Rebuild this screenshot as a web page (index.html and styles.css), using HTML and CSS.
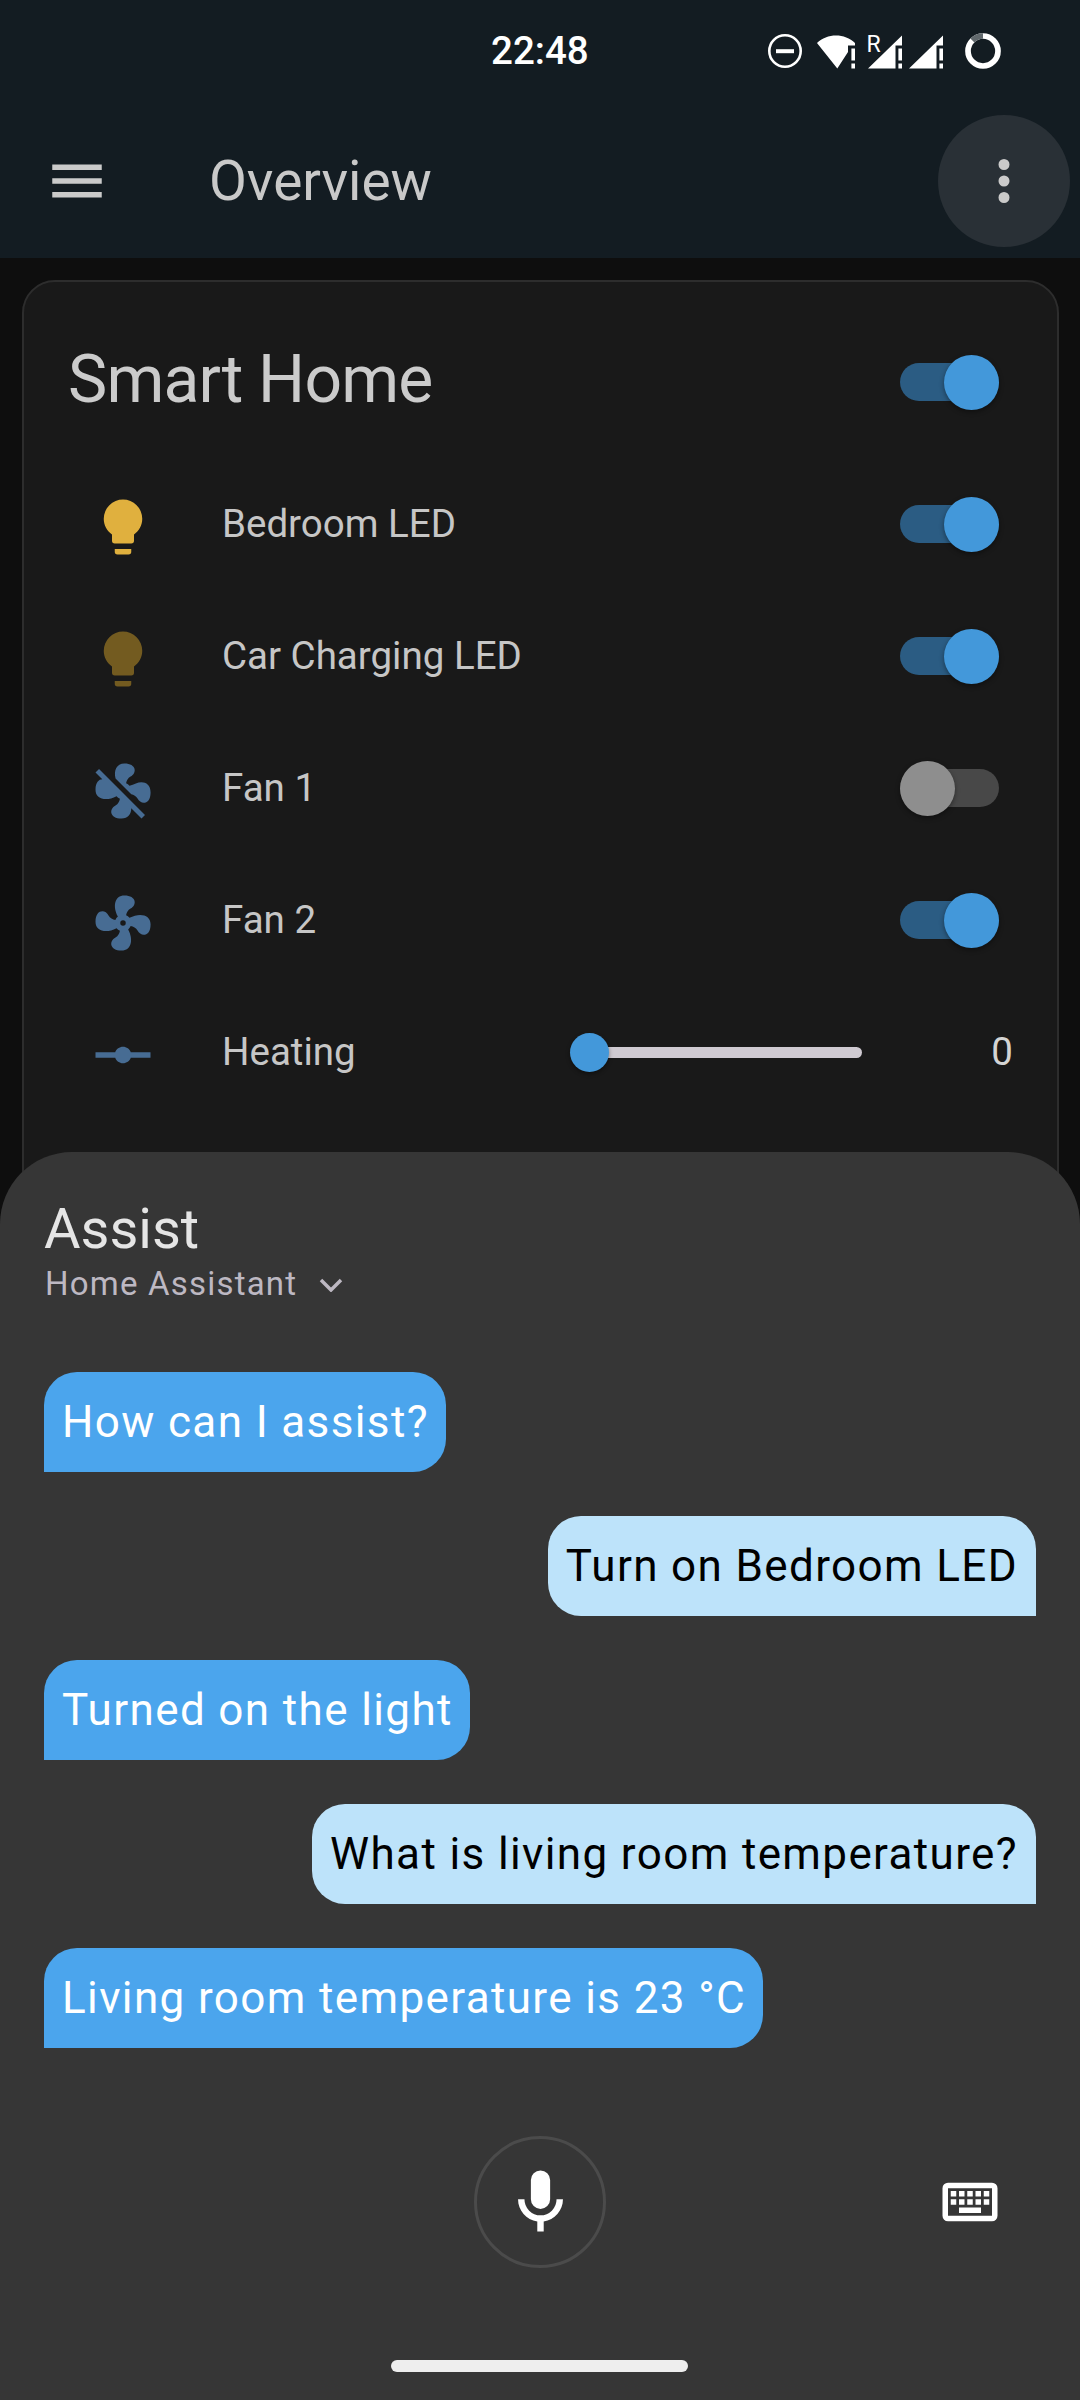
FILE: index.html
```html
<!DOCTYPE html>
<html lang="en">
<head>
<meta charset="utf-8">
<title>Overview</title>
<link rel="stylesheet" href="styles.css">
</head>
<body>
<div class="screen">
  <header class="appbar">
    <div class="statusbar">
      <span class="time">22:48</span>
      <div class="status-icons">
        <svg class="si-dnd" viewBox="0 0 34 36"><circle cx="17" cy="18" r="15.7" fill="none" stroke="#fff" stroke-width="2.6"/><rect x="8" y="16.200" width="18" height="4" fill="#fff"/></svg>
        <svg class="si-wifi" viewBox="0 0 38 36"><path d="M0 10C5 5 12 2.500 19 2.500C26 2.500 33 5 38 10V12.500H31V19L20.300 35.500Z" fill="#fff"/><rect x="34.400" y="15.500" width="3.600" height="12" fill="#fff"/><rect x="34.400" y="30.500" width="3.600" height="5" fill="#fff"/></svg>
        <svg class="si-signal" viewBox="0 0 35 36"><path d="M0 35.500L34 2.500V12.500H27.500V35.500Z" fill="#fff"/><rect x="30.400" y="15.500" width="3.600" height="12" fill="#fff"/><rect x="30.400" y="30.500" width="3.600" height="5" fill="#fff"/><text x="-1.500" y="18.500" class="si-r">R</text></svg>
        <svg class="si-signal si-signal2" viewBox="0 0 35 36"><path d="M0 35.500L34 2.500V12.500H27.500V35.500Z" fill="#fff"/><rect x="30.400" y="15.500" width="3.600" height="12" fill="#fff"/><rect x="30.400" y="30.500" width="3.600" height="5" fill="#fff"/></svg>
        <svg class="si-batt" viewBox="0 0 36 36"><circle cx="18" cy="18" r="15" fill="none" stroke="#fff" stroke-width="5.700"/><path d="M18 3A15 15 0 0 0 7.400 7.400" fill="none" stroke="#61696d" stroke-width="5.700"/></svg>
      </div>
    </div>
    <div class="toolbar">
      <svg class="tb-icon" viewBox="0 0 24 24"><path d="M3,6H21V8H3V6M3,11H21V13H3V11M3,16H21V18H3V16Z"/></svg>
      <span class="tb-title">Overview</span>
      <span class="tb-more"><svg class="tb-icon" viewBox="0 0 24 24"><path d="M12,16A2,2 0 0,1 14,18A2,2 0 0,1 12,20A2,2 0 0,1 10,18A2,2 0 0,1 12,16M12,10A2,2 0 0,1 14,12A2,2 0 0,1 12,14A2,2 0 0,1 10,12A2,2 0 0,1 12,10M12,4A2,2 0 0,1 14,6A2,2 0 0,1 12,8A2,2 0 0,1 10,6A2,2 0 0,1 12,4Z"/></svg></span>
    </div>
  </header>

  <main class="card">
    <div class="card-head">
      <h1 class="card-title">Smart Home</h1>
      <span class="switch on"><span class="knob"></span></span>
    </div>
    <div class="row">
      <span class="badge"><svg class="ic bulb-on" viewBox="0 0 24 24"><path d="M12,2A7,7 0 0,0 5,9C5,11.38 6.19,13.47 8,14.74V17A1,1 0 0,0 9,18H15A1,1 0 0,0 16,17V14.74C17.81,13.47 19,11.38 19,9A7,7 0 0,0 12,2M9,21A1,1 0 0,0 10,22H14A1,1 0 0,0 15,21V20H9V21Z"/></svg></span>
      <span class="label">Bedroom LED</span>
      <span class="switch on"><span class="knob"></span></span>
    </div>
    <div class="row">
      <span class="badge"><svg class="ic bulb-dim" viewBox="0 0 24 24"><path d="M12,2A7,7 0 0,0 5,9C5,11.38 6.19,13.47 8,14.74V17A1,1 0 0,0 9,18H15A1,1 0 0,0 16,17V14.74C17.81,13.47 19,11.38 19,9A7,7 0 0,0 12,2M9,21A1,1 0 0,0 10,22H14A1,1 0 0,0 15,21V20H9V21Z"/></svg></span>
      <span class="label">Car Charging LED</span>
      <span class="switch on"><span class="knob"></span></span>
    </div>
    <div class="row">
      <span class="badge"><svg class="ic blue" viewBox="0 0 24 24"><path d="M12.5,2C9.64,2 8.57,4.55 9.29,7.47L15,13.16C15.87,13.37 16.81,13.81 17.28,14.73C18.46,17.1 22.03,17 22.03,12.5C22.03,8.92 19,8.13 16.66,9.31C15.96,9.66 15.17,9.9 14.35,10.13C14.03,9.73 13.61,9.42 13.13,9.22C13.32,8.29 13.76,7.24 14.75,6.75C17.11,5.57 17,2 12.5,2M3.28,4L2,5.27L4.47,7.73C3.22,7.74 2,8.87 2,11.5C2,15.07 5.96,15.85 9.65,13.87C9.97,14.27 10.4,14.59 10.89,14.79C10.69,15.71 10.25,16.75 9.27,17.24C6.91,18.42 7,22 11.5,22C13.8,22 15.04,20.35 15,18.26L18.73,22L20,20.72L3.28,4Z"/></svg></span>
      <span class="label">Fan 1</span>
      <span class="switch"><span class="knob"></span></span>
    </div>
    <div class="row">
      <span class="badge"><svg class="ic blue" viewBox="0 0 24 24"><path d="M12,11A1,1 0 0,0 11,12A1,1 0 0,0 12,13A1,1 0 0,0 13,12A1,1 0 0,0 12,11M12.5,2C17,2 17.11,5.57 14.75,6.75C13.76,7.24 13.32,8.29 13.13,9.22C13.61,9.42 14.03,9.73 14.35,10.13C18.05,8.13 22.03,8.92 22.03,12.5C22.03,17 18.46,17.1 17.28,14.73C16.78,13.74 15.72,13.3 14.79,13.11C14.59,13.59 14.28,14 13.88,14.34C15.87,18.03 15.08,22 11.5,22C7,22 6.91,18.42 9.27,17.24C10.25,16.75 10.69,15.71 10.89,14.79C10.4,14.59 9.97,14.27 9.65,13.87C5.96,15.85 2,15.07 2,11.5C2,7 5.56,6.89 6.74,9.26C7.24,10.25 8.29,10.68 9.22,10.87C9.41,10.39 9.73,9.97 10.14,9.65C8.15,5.96 8.94,2 12.5,2Z"/></svg></span>
      <span class="label">Fan 2</span>
      <span class="switch on"><span class="knob"></span></span>
    </div>
    <div class="row">
      <span class="badge"><svg class="ic blue" viewBox="0 0 24 24"><path d="M2 11H9.17C9.58 9.83 10.69 9 12 9S14.42 9.83 14.83 11H22V13H14.83C14.42 14.17 13.31 15 12 15S9.58 14.17 9.17 13H2V11Z"/></svg></span>
      <span class="label">Heating</span>
      <span class="slider"><span class="thumb"></span></span>
      <span class="value">0</span>
    </div>
  </main>

  <section class="sheet">
    <div class="sheet-head">
      <h2 class="sheet-title">Assist</h2>
      <div class="sheet-sub">
        <span>Home Assistant</span>
        <svg class="chev" viewBox="0 0 24 14"><path d="M2 2L12 12L22 2" fill="none" stroke="#bdb8c2" stroke-width="3.500"/></svg>
      </div>
    </div>
    <div class="messages">
      <div class="bubble hass">How can I assist?</div>
      <div class="bubble user">Turn on Bedroom LED</div>
      <div class="bubble hass">Turned on the light</div>
      <div class="bubble user">What is living room temperature?</div>
      <div class="bubble hass">Living room temperature is 23 °C</div>
    </div>
    <div class="controls">
      <span class="mic"><svg class="mic-icon" viewBox="0 0 24 24"><path d="M12,2A3,3 0 0,1 15,5V11A3,3 0 0,1 12,14A3,3 0 0,1 9,11V5A3,3 0 0,1 12,2M19,11C19,14.53 16.39,17.44 13,17.93V21H11V17.93C7.61,17.44 5,14.53 5,11H7A5,5 0 0,0 12,16A5,5 0 0,0 17,11H19Z"/></svg></span>
      <svg class="kbd" viewBox="0 0 24 24"><path d="M4,5A2,2 0 0,0 2,7V17A2,2 0 0,0 4,19H20A2,2 0 0,0 22,17V7A2,2 0 0,0 20,5H4M4,7H20V17H4V7M5,8V10H7V8H5M8,8V10H10V8H8M11,8V10H13V8H11M14,8V10H16V8H14M17,8V10H19V8H17M5,11V13H7V11H5M8,11V13H10V11H8M11,11V13H13V11H11M14,11V13H16V11H14M17,11V13H19V11H17M8,14V16H16V14H8Z"/></svg>
    </div>
    <div class="homebar"></div>
  </section>
</div>
</body>
</html>
```
FILE: styles.css
```css
* { box-sizing: border-box; }
html, body { margin: 0; padding: 0; }
body { font-family: Roboto, "Liberation Sans", sans-serif; background: #0f0f0f; }
h1, h2 { margin: 0; font-weight: 400; }

.screen { position: relative; width: 1080px; height: 2400px; overflow: hidden; background: #0e0e0e; }

.appbar { height: 258px; background: #131c22; }
.statusbar { height: 104px; display: flex; align-items: center; padding-left: 491px; padding-bottom: 3px; }
.time { width: 277px; color: #fff; font-size: 38.5px; font-weight: 500; line-height: 44px; padding-top: 1px; }
.status-icons { display: flex; align-items: center; }
.status-icons svg { display: block; height: 36px; overflow: visible; }
.si-dnd { width: 34px; }
.si-wifi { width: 38px; margin-left: 15px; }
.si-signal { width: 35px; margin-left: 13px; }
.si-signal2 { margin-left: 6px; }
.si-batt { width: 36px; margin-left: 21px; }
.si-r { font-family: Roboto, sans-serif; font-size: 23px; fill: #fff; }

.toolbar { height: 154px; display: flex; align-items: center; padding-left: 44px; padding-right: 10px; }
.tb-icon { width: 66px; height: 66px; fill: #cacaca; display: block; }
.tb-title { flex: 1; margin-left: 99px; font-size: 55px; color: #c9c9c9; line-height: 66px; }
.tb-more { width: 132px; height: 132px; border-radius: 50%; background: #293036; display: flex; align-items: center; justify-content: center; }

.card { margin: 22px 21px 0 22px; height: 1400px; padding: 0 44px; background: #191919; border: 2.5px solid #2d2d2d; border-radius: 33px; }
.card-head { height: 176px; display: flex; align-items: center; justify-content: space-between; padding-top: 24px; }
.card-title { font-size: 66px; letter-spacing: -.8px; color: #cbcbcb; line-height: 80px; margin-top: -4px; }

.row { height: 132px; display: flex; align-items: center; }
.badge { width: 110px; display: flex; justify-content: center; padding-top: 5px; }
.ic { width: 66px; height: 66px; display: block; }
.bulb-on { fill: #e0b03e; }
.bulb-dim { fill: #735b20; }
.blue { fill: #476c93; }
.label { flex: 1; margin-left: 44px; font-size: 38.5px; color: #c6c6c6; line-height: 48px; margin-top: -1px; }

.switch { width: 99px; height: 38px; border-radius: 19px; background: #484848; display: flex; align-items: center; justify-content: flex-start; margin-right: 14px; }
.switch.on { background: #2b5c83; justify-content: flex-end; }
.knob { flex: none; width: 55px; height: 55px; border-radius: 50%; background: #8e8e8e; box-shadow: 0 2px 5px rgba(0,0,0,.4); }
.on .knob { background: #4398da; }

.slider { width: 272px; height: 11px; border-radius: 6px; background: #cfcad1; display: flex; align-items: center; }
.thumb { flex: none; width: 39px; height: 39px; margin-left: -20px; border-radius: 50%; background: #4398da; box-shadow: 0 2px 4px rgba(0,0,0,.4); }
.value { width: 151px; text-align: right; font-size: 38.5px; color: #d4d4d4; line-height: 48px; margin-top: -1px; }

.sheet { position: absolute; left: 0; right: 0; top: 1152px; bottom: 0; background: #363636; border-radius: 72px 72px 0 0; padding: 0 44px; display: flex; flex-direction: column; }
.sheet-head { height: 220px; padding-top: 44px; }
.sheet-title { font-size: 56px; color: #e5e5e5; line-height: 66px; }
.sheet-sub { display: flex; align-items: center; font-size: 33px; letter-spacing: 1.2px; color: #bdb8c2; line-height: 44px; margin-top: 0; padding-left: 1px; }
.chev { width: 24px; height: 14px; margin-left: 22px; margin-top: 1px; }

.messages { display: flex; flex-direction: column; gap: 44px; }
.bubble { height: 100px; line-height: 100px; padding: 0 17px 0 18px; font-size: 44px; letter-spacing: 1.375px; white-space: nowrap; }
.hass { align-self: flex-start; background: #4ba5ed; color: #fff; border-radius: 33px 33px 33px 0; }
.user { align-self: flex-end; background: #bde3fa; color: #000; border-radius: 33px 33px 0 33px; padding-right: 18px; }

.controls { margin-top: 88px; height: 132px; display: grid; grid-template-columns: 1fr auto 1fr; align-items: center; }
.mic { grid-column: 2; width: 132px; height: 132px; border: 3px solid #4b4b4b; border-radius: 50%; display: flex; align-items: center; justify-content: center; }
.mic-icon { width: 77px; height: 77px; fill: #fff; display: block; }
.kbd { grid-column: 3; justify-self: end; width: 66px; height: 66px; fill: #fff; margin-right: 33px; display: block; }

.homebar { width: 297px; height: 12px; border-radius: 6px; background: #eeeeee; margin: 92px 0 0 347px; }
```
